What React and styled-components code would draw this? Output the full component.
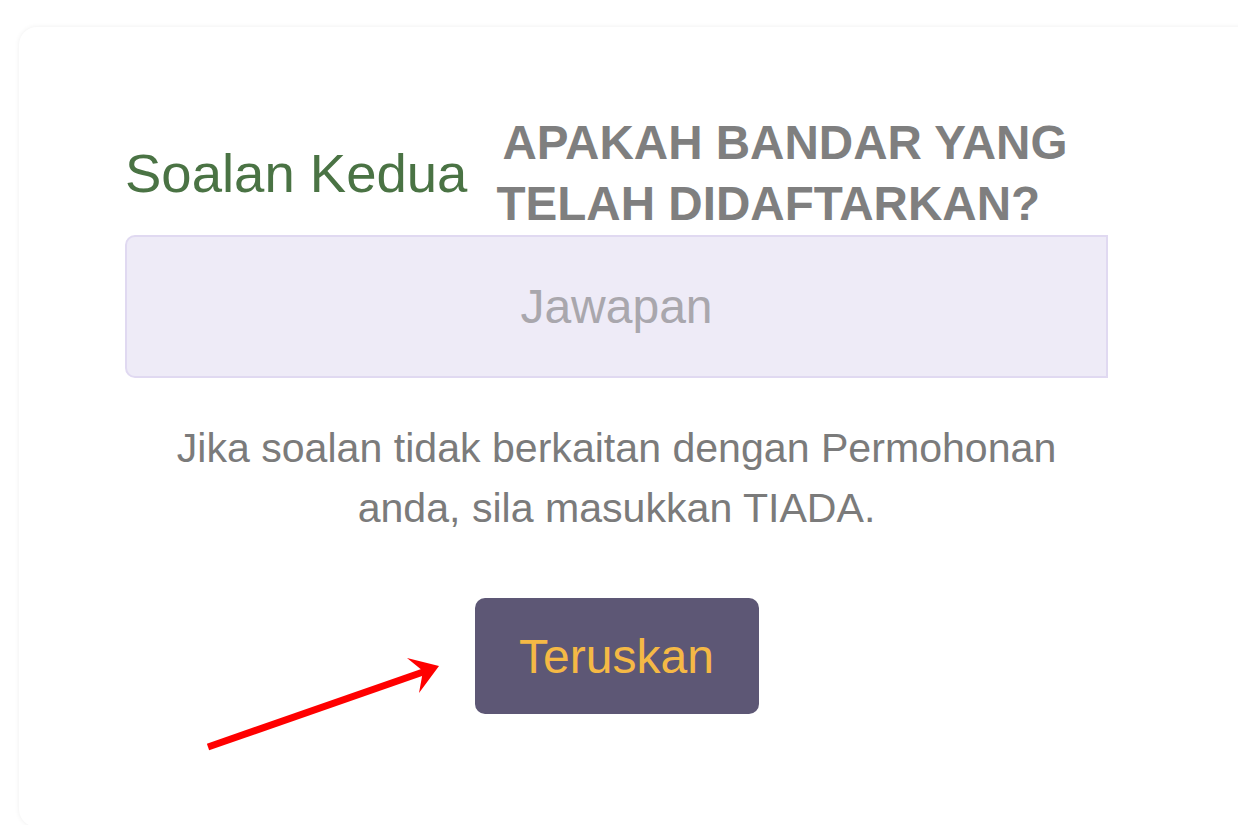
import React from 'react';
import styled, {createGlobalStyle} from 'styled-components';

const Global = createGlobalStyle`
html, body {
  margin: 0;
  background: #ffffff;
  overflow: hidden;
}
body {
  font-family: "Liberation Sans", Arial, sans-serif;
}
`;

const Card = styled.div`
position: relative;
margin: 27px 0 0 19px;
width: 1240px;
height: 800px;
box-sizing: border-box;
padding: 85px 0 0 106px;
background: #fff;
border-radius: 18px;
box-shadow: 0 0 5px rgba(0, 0, 0, 0.07);
`;

const Column = styled.div`
width: 983px;
display: flex;
flex-direction: column;
align-items: center;
`;

const HeadRow = styled.div`
align-self: stretch;
display: flex;
align-items: center;
gap: 29px;
`;

const Label = styled.span`
font-size: 54.5px;
line-height: 63px;
color: #4a7344;
white-space: nowrap;
`;

const Question = styled.h2`
margin: 0;
font-size: 47.6px;
line-height: 61px;
font-weight: bold;
color: #7f7f7f;
text-indent: 6px;
`;

const Answer = styled.input`
align-self: stretch;
box-sizing: border-box;
height: 143px;
margin-top: 1px;
border: 2px solid #e0d9f1;
border-radius: 10px 0 0 10px;
background: #eeebf7;
font-family: inherit;
font-size: 48px;
text-align: center;
color: #555;
outline: none;
&::placeholder {
  color: #a9a7ad;
}
`;

const Hint = styled.p`
margin: 40px 0 0;
width: 920px;
font-size: 41.1px;
line-height: 60px;
text-align: center;
color: #7b7b7b;
`;

const Button = styled.button`
margin-top: 60px;
width: 284px;
height: 116px;
border: none;
border-radius: 10px;
background: #5d5775;
color: #f5b945;
font-family: inherit;
font-size: 48px;
cursor: pointer;
`;

const Pointer = styled.svg`
position: absolute;
left: 171px;
top: 613px;
`;

const Arrow = () => (
    <Pointer width="260" height="120" viewBox="0 0 260 120">
        <line x1="18" y1="107" x2="236" y2="31" stroke="#ff0000" strokeWidth="7"/>
        <polygon points="249,26 217,18 233,31 229,53" fill="#ff0000"/>
    </Pointer>
);

export default () => {
    return <>
        <Global/>
        <Card>
            <Column>
                <HeadRow>
                    <Label>Soalan Kedua</Label>
                    <Question>APAKAH BANDAR YANG<br/>TELAH DIDAFTARKAN?</Question>
                </HeadRow>
                <Answer placeholder="Jawapan"/>
                <Hint>Jika soalan tidak berkaitan dengan Permohonan anda, sila masukkan TIADA.</Hint>
                <Button>Teruskan</Button>
            </Column>
            <Arrow/>
        </Card>
    </>;
}
